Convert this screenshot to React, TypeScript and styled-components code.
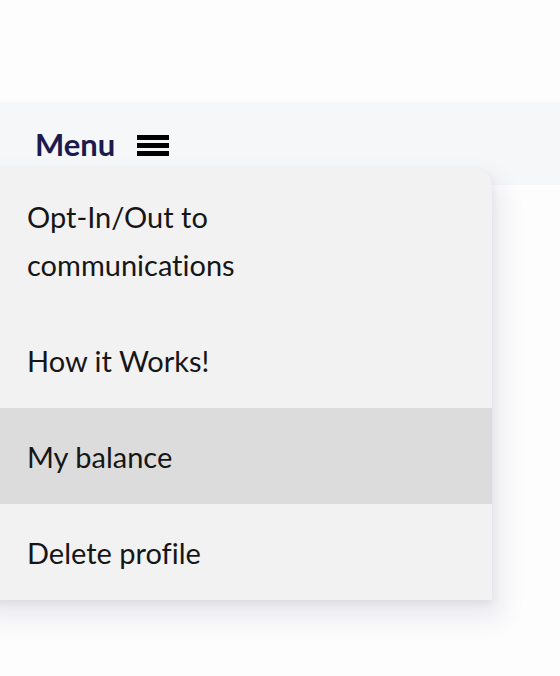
import styled, { createGlobalStyle } from "styled-components";

const GlobalStyle = createGlobalStyle`
	html, body {
		margin: 0;
		padding: 0;
		background: #fdfdfe;
	}
	body {
		font-family: Lato, "Open Sans", sans-serif;
		font-variant-ligatures: none;
		overflow: hidden;
	}
`;

const Page = styled.div`
	width: 560px;
	height: 676px;
	padding-top: 102px;
	box-sizing: border-box;
`;

const HeaderBar = styled.div`
	position: relative;
	height: 83px;
	background: #f6f7f9;
	display: flex;
	align-items: center;
	padding-left: 35px;
	box-sizing: border-box;
`;

const MenuToggle = styled.button`
	display: flex;
	align-items: center;
	gap: 22px;
	border: none;
	background: none;
	padding: 0;
	font-family: inherit;
	font-size: 31px;
	font-weight: 700;
	color: #1d1a4d;
	cursor: pointer;
`;

const Burger = styled.span`
	display: flex;
	flex-direction: column;
	gap: 3px;
	width: 32px;
	margin-top: 4px;
	span {
		display: block;
		height: 5px;
		background: #000;
	}
`;

const Dropdown = styled.ul`
	position: absolute;
	top: 66px;
	left: -20px;
	width: 512px;
	margin: 0;
	padding: 0;
	list-style: none;
	background: #f2f2f2;
	border-radius: 0 18px 0 0;
	overflow: hidden;
	box-shadow: 6px 14px 24px 6px rgba(20, 20, 50, 0.07), 0 4px 8px rgba(20, 20, 40, 0.07);
	z-index: 2;
`;

const Item = styled.li<{ $active?: boolean }>`
	padding: 25px 20px 23px 47px;
	font-size: 29px;
	line-height: 48px;
	color: #161616;
	background: ${(p) => (p.$active ? "#dcdcdc" : "transparent")};
`;

const Label = styled.span`
	display: block;
	max-width: 250px;
`;

const items = [
	"Opt-In/Out to communications",
	"How it Works!",
	"My balance",
	"Delete profile",
];

export default function App() {
	return (
		<Page>
			<GlobalStyle />
			<HeaderBar>
				<MenuToggle>
					Menu
					<Burger>
						<span />
						<span />
						<span />
					</Burger>
				</MenuToggle>
				<Dropdown>
					{items.map((label) => (
						<Item key={label} $active={label === "My balance"}>
							<Label>{label}</Label>
						</Item>
					))}
				</Dropdown>
			</HeaderBar>
		</Page>
	);
}
